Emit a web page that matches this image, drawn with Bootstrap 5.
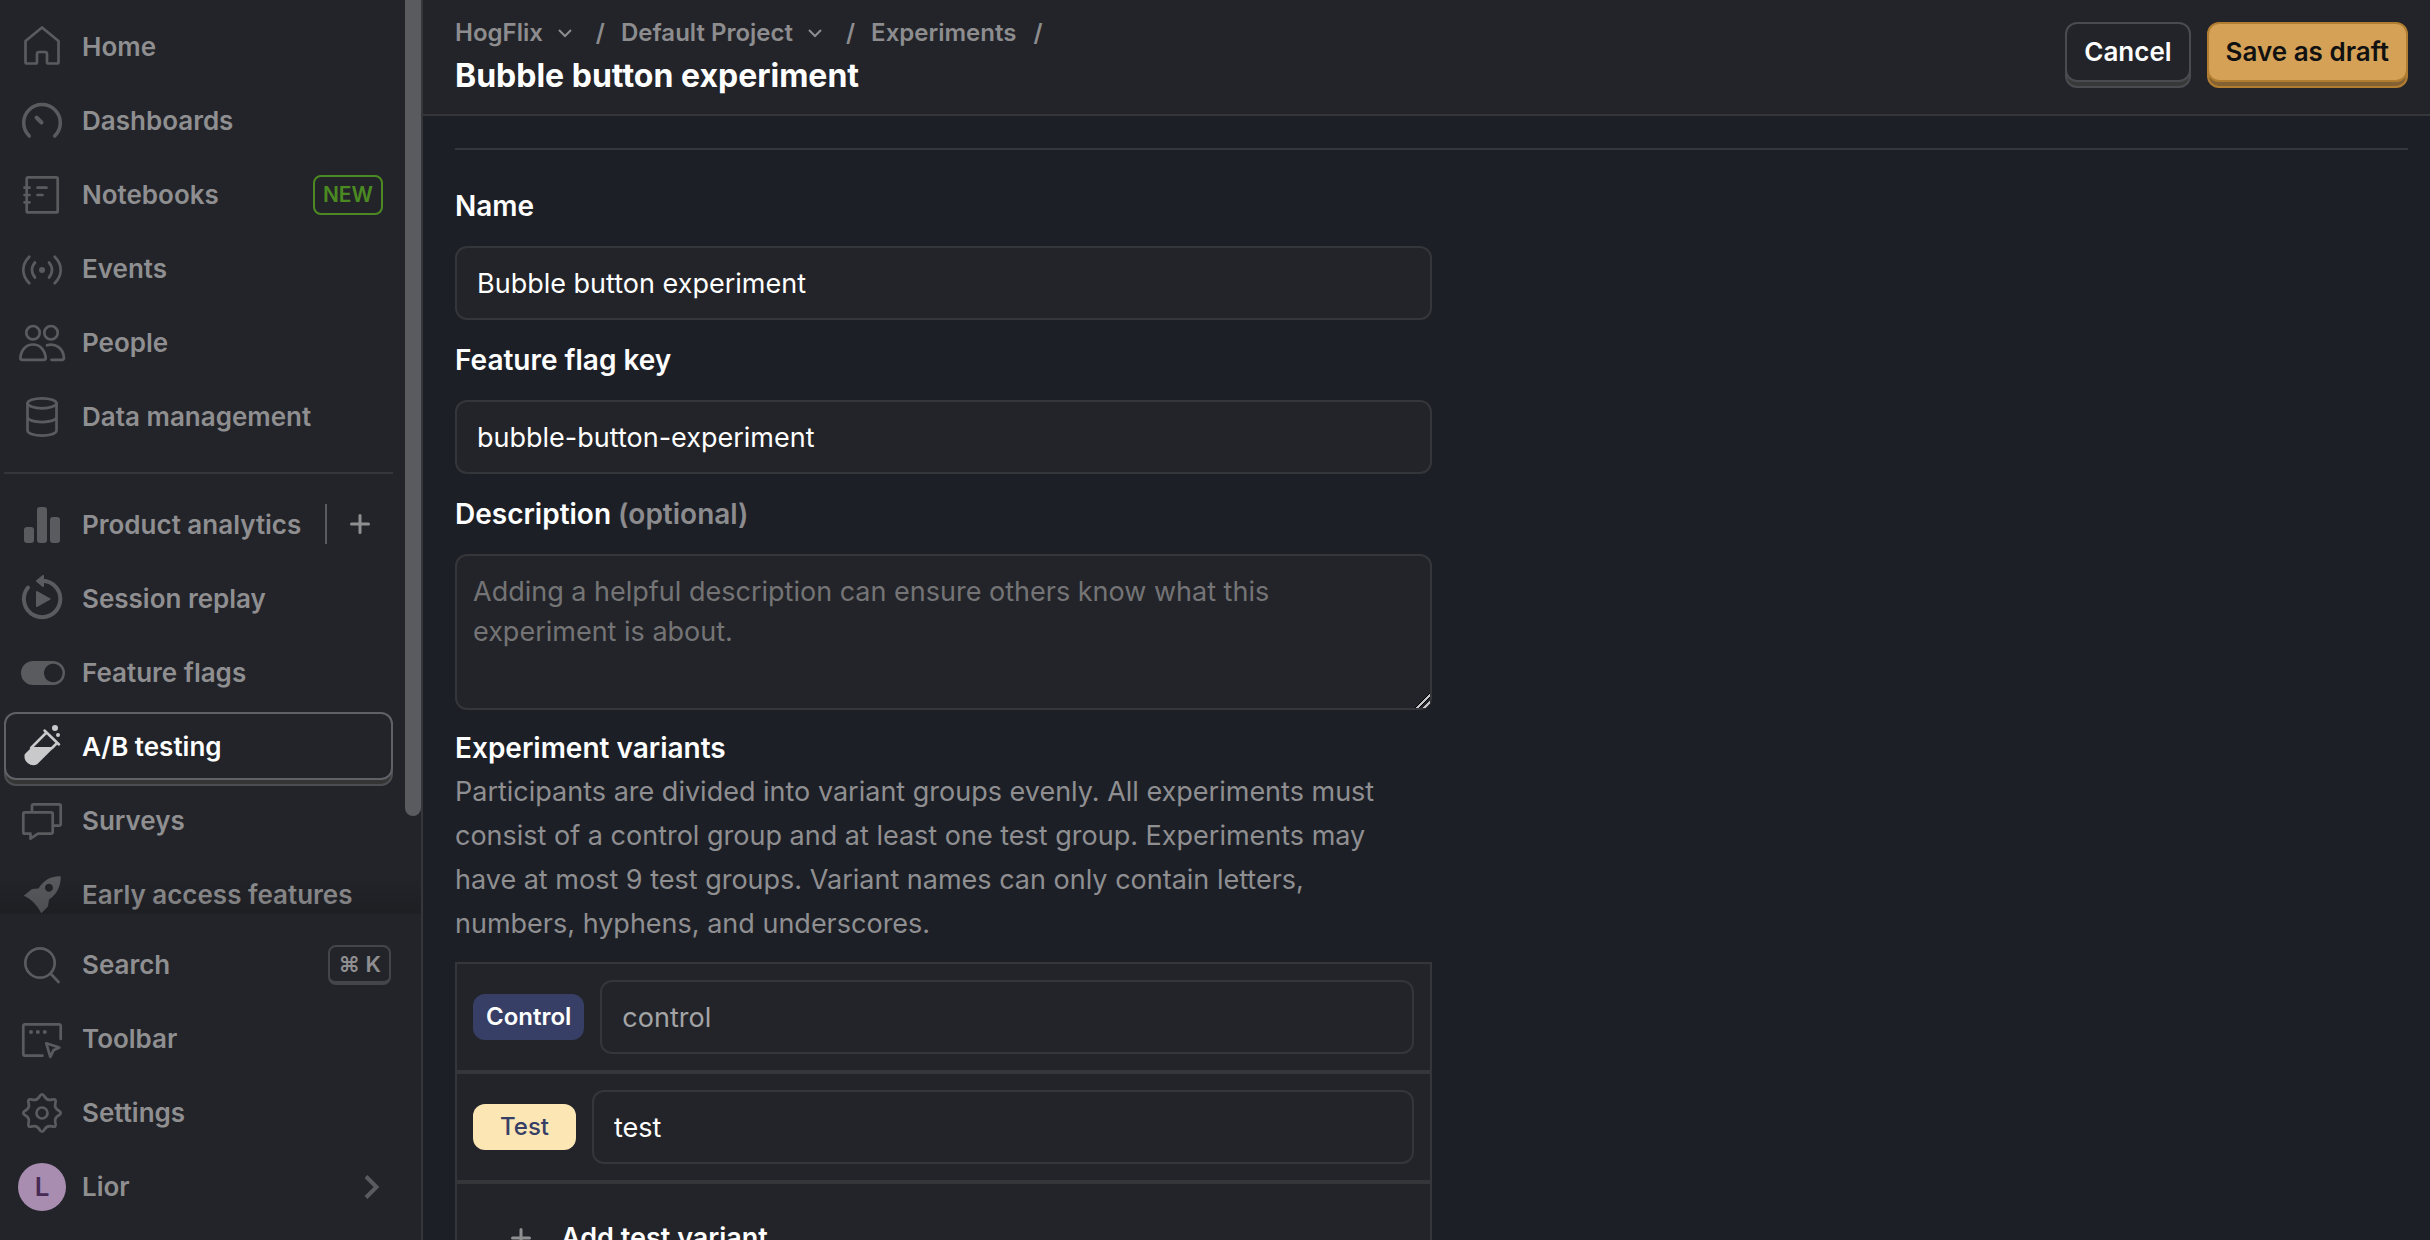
<!DOCTYPE html>
<html lang="en" data-bs-theme="dark">
<head>
<meta charset="utf-8">
<meta name="viewport" content="width=device-width, initial-scale=1">
<title>Bubble button experiment</title>
<link href="https://cdn.jsdelivr.net/npm/bootstrap@5.3.0/dist/css/bootstrap.min.css" rel="stylesheet">
<style>
:root{--page:#1d1f27;--panel:#232429;--line:#35363a;--muted:#8f8f91;--icon:#5a5b5f;}
body{background:var(--page);color:#fff;font-family:Inter,"Liberation Sans",sans-serif;font-size:27px;line-height:44px;overflow:hidden}
.sidebar{width:423px;background:var(--panel);border-right:2px solid var(--line)}
.side-scroll{min-height:0}
.side-fade{left:0;right:0;bottom:0;height:40px;background:linear-gradient(transparent,rgba(0,0,0,.15))}
.side-thumb{right:0;top:0;width:16px;height:816px;background:#5a5b5f;border-radius:0 0 8px 8px}
.side-list{padding:9px 28px 0 4px}
.side-list hr{margin:19px 0 13px;border-top:2px solid var(--line);opacity:1}
.side-foot{padding:13px 28px 17px 4px}
.side-item{height:74px;padding:3px 0}
.side-link{height:68px;padding:1px 0 0 12px;border:2px solid transparent;border-radius:12px;color:var(--muted);font-weight:600;font-size:26px;text-decoration:none;background:none;gap:16px}
.side-link svg{width:48px;height:48px;color:var(--icon);flex:none}
.side-link.active{color:#fff;background:var(--panel);border-color:#606166;box-shadow:0 6px 0 -2px #353535,0 6px 0 0 #4c4d50}
.side-link.active svg{color:#c9c9cb}
.ico{fill:none;stroke:currentColor;stroke-width:2.7;stroke-linecap:round;stroke-linejoin:round}
.new-tag{height:40px;margin-right:8px;padding:0 8px;border:2px solid #4b8a22;border-radius:8px;color:#4b8a22;font-size:21px;font-weight:600;line-height:36px}
.key-tag{height:40px;padding:0 8px;border:2px solid #44454a;border-bottom-width:4px;border-radius:8px;font-size:22px;font-weight:600;line-height:34px;font-family:Inter,"DejaVu Sans",sans-serif}
.side-sep{width:2px;height:40px;background:var(--icon)}
.side-add{width:66px;height:68px;border:0;background:none;color:var(--muted)}
.avatar-dot{width:48px;height:48px;border-radius:50%;background:#a88db1;color:#472b55;font-size:26px}
.topbar{height:116px;padding:22px 22px 0 32px;background:var(--panel);border-bottom:2px solid var(--line)}
.crumbs{font-size:24px;line-height:32px;font-weight:600;color:#8d8d8f;margin-top:-5px}
.crumbs span{padding-left:1px}
.crumbs a,.crumbs button{color:inherit;text-decoration:none;font:inherit;border:0;padding:0;background:none}
.page-title{font-size:32px;line-height:48px;font-weight:700;margin:3px 0 0}
.btn-raised{height:60px;padding:0 17px;border:2px solid #4a4b50;border-radius:12px;background:var(--panel);color:#fff;font-size:26px;font-weight:600;line-height:36px;box-shadow:0 6px 0 -2px #383838,0 6px 0 0 #4a4b50}
.btn-raised.gold{background:#d5a157;border-color:#b17d31;color:#111;box-shadow:0 6px 0 -2px #846132,0 6px 0 0 #b17d31}
.content{padding:32px 22px 0 32px}
.content>hr{margin:0;border-top:2px solid var(--line);opacity:1}
.form-stack{padding-top:34px}
.field-label{display:block;font-weight:600;font-size:28px;line-height:44px;margin:0}
.field-label span{color:#8c8c8f}
.field{margin-bottom:18px}
.field .form-control{margin-top:18px}
.field-area{margin-bottom:16px}
.form-control,.form-control:disabled{height:74px;padding:0 20px;border:2px solid var(--line);border-radius:12px;background:var(--panel);color:#fff;font-size:27px;line-height:40px}
.form-control:disabled{color:#a3a4a6}
textarea.form-control{height:156px;padding:16px}
textarea::-webkit-resizer{background:linear-gradient(135deg,transparent 48%,#000 48% 52%,#c4c4c6 52% 62%,#000 62% 66%,transparent 66% 74%,#c4c4c6 74% 84%,transparent 84%)}
.form-control::placeholder{color:#747476;opacity:1}
.helper{color:#8f8f91;margin:0 0 16px;padding-right:16px}
.variant-row{background:var(--panel);border:2px solid var(--line);padding:16px}
.variant-tag{height:46px;border-radius:12px;font-size:24px;font-weight:600;line-height:46px;background:#373f66;color:#fff;padding:0 13px;margin:0}
.variant-tag.sand{background:#fbe6b4;color:#373f66;font-weight:500;padding:0 27px}
.add-btn{height:76px;padding:0 30px;gap:22px;border:0;background:none;color:#fff;font-size:27px;font-weight:600}
</style>
</head>
<body>
<div class="d-flex vh-100">
  <nav class="sidebar d-flex flex-column flex-shrink-0" aria-label="Main">
    <div class="side-scroll flex-grow-1 position-relative overflow-hidden">
      <div class="side-list">
        <div class="side-item"><a href="#" class="side-link d-flex align-items-center"><svg viewBox="0 0 48 48" class="ico"><path d="M24 4.500 7.500 18V39a1.500 1.500 0 0 0 1.500 1.500h8.500a1.500 1.500 0 0 0 1.500-1.500v-8a2 2 0 0 1 2-2h6a2 2 0 0 1 2 2v8a1.500 1.500 0 0 0 1.500 1.500H39a1.500 1.500 0 0 0 1.500-1.500V18z"/></svg>Home</a></div>
        <div class="side-item"><a href="#" class="side-link d-flex align-items-center"><svg viewBox="0 0 48 48" class="ico"><path stroke-width="3.500" d="M11.300 39A18.300 18.300 0 1 1 36.700 39"/><path stroke-width="4" d="M18.500 20.500l5 5"/></svg>Dashboards</a></div>
        <div class="side-item"><a href="#" class="side-link d-flex align-items-center"><svg viewBox="0 0 48 48" class="ico"><rect x="8.700" y="6.400" width="31" height="35" rx="1.500"/><path d="M6.500 16.700h5M6.500 24h5M6.500 31.300h5M19.500 16.700h9M19.500 24h5"/></svg>Notebooks<span class="new-tag ms-auto">NEW</span></a></div>
        <div class="side-item"><a href="#" class="side-link d-flex align-items-center"><svg viewBox="0 0 48 48" class="ico"><circle cx="24" cy="25" r="3" fill="currentColor" stroke="none"/><path d="M17 17.500c-4 4.500-4 10.500 0 15M31 17.500c4 4.500 4 10.500 0 15M11.300 11.700c-8 8-8 18.600 0 26.600M36.700 11.700c8 8 8 18.600 0 26.600"/></svg>Events</a></div>
        <div class="side-item"><a href="#" class="side-link d-flex align-items-center"><svg viewBox="0 0 48 48" class="ico"><circle cx="15" cy="13.700" r="6.700"/><circle cx="33" cy="13.700" r="6.700"/><path d="M2.400 39C3 31 8 25.500 15 25.500S27 31 27.700 39q0 1.800-1.800 1.800H4.200q-1.800 0-1.800-1.800zM29 26.300C37 23.700 45.500 29 45.900 39q0 1.800-1.800 1.800H33.500"/></svg>People</a></div>
        <div class="side-item"><a href="#" class="side-link d-flex align-items-center"><svg viewBox="0 0 48 48" class="ico"><ellipse cx="24" cy="10.300" rx="14.500" ry="5"/><path d="M9.500 10.300v27c0 7 29 7 29 0v-27M9.500 24.300c2 6.300 27 6.300 29 0"/></svg>Data management</a></div>
        <hr>
        <div class="side-item d-flex align-items-center"><a href="#" class="side-link d-flex align-items-center flex-grow-1"><svg viewBox="0 0 48 48" fill="currentColor"><rect x="6" y="26" width="10" height="16" rx="3"/><rect x="19" y="6" width="10" height="36" rx="3"/><rect x="32" y="16" width="10" height="26" rx="3"/></svg>Product analytics</a><span class="side-sep"></span><button class="side-add p-0 d-flex align-items-center justify-content-center" aria-label="New insight"><svg width="24" height="24" viewBox="0 0 24 24" fill="none" stroke="currentColor" stroke-width="3" stroke-linecap="round"><path d="M12 3.500v17M3.500 12h17"/></svg></button></div>
        <div class="side-item"><a href="#" class="side-link d-flex align-items-center"><svg viewBox="0 0 48 48" class="ico"><path stroke-width="4" d="M24 5.800A18.200 18.200 0 1 1 10 12.500"/><path fill="currentColor" stroke-width="2" d="M19 6l6-5v10zM19 17l12.500 7L19 31z"/></svg>Session replay</a></div>
        <div class="side-item"><a href="#" class="side-link d-flex align-items-center"><svg viewBox="0 0 48 48" fill="currentColor"><path fill-rule="evenodd" d="M15 12h20a12 12 0 0 1 0 24H15a12 12 0 0 1 0-24zM35.200 14.700a9.300 9.300 0 1 0 .1 0z"/></svg>Feature flags</a></div>
        <div class="side-item"><a href="#" class="side-link active d-flex align-items-center" aria-current="page"><svg viewBox="0 0 48 48" class="ico"><circle cx="37" cy="5" r="3" fill="currentColor" stroke="none"/><circle cx="40" cy="12" r="2" fill="currentColor" stroke="none"/><path stroke-width="2.500" d="M26.500 7.500l14.500 14M28.500 9.500L13 25M38.500 20.500L34 25"/><path fill="currentColor" stroke="none" d="M14 24L6.700 31.300A8.900 8.900 0 0 0 19.200 41.200L36.500 24z"/></svg>A/B testing</a></div>
        <div class="side-item"><a href="#" class="side-link d-flex align-items-center"><svg viewBox="0 0 48 48" class="ico"><path d="M6.800 15.300h26.400a1.500 1.500 0 0 1 1.500 1.500v18.400a1.500 1.500 0 0 1-1.500 1.500H20l-7.500 5v-5H6.800a1.500 1.500 0 0 1-1.500-1.500V16.800a1.500 1.500 0 0 1 1.500-1.500zM14 15V8.800a1.500 1.500 0 0 1 1.500-1.500h25.700a1.500 1.500 0 0 1 1.500 1.500v18.400a1.500 1.500 0 0 1-1.500 1.500H35"/></svg>Surveys</a></div>
        <div class="side-item"><a href="#" class="side-link d-flex align-items-center"><svg viewBox="0 0 48 48" fill="currentColor"><path fill-rule="evenodd" d="M42.700 5.300C34 5 26 8.500 20.500 17.500L14 18 5.700 24.700C11 26.500 19 33 23.300 42.300L30 35.500 31 28.500C39 23.500 43 15 42.700 5.300zM31 12.700a4 4 0 1 1-.1 0z"/></svg>Early access features</a></div>
      </div>
      <div class="side-fade position-absolute"></div>
      <div class="side-thumb position-absolute"></div>
    </div>
    <div class="side-foot">
      <div class="side-item"><a href="#" class="side-link d-flex align-items-center"><svg viewBox="0 0 48 48" class="ico"><circle cx="22" cy="22" r="14.700"/><path d="M33 33l7.500 8"/></svg>Search<span class="key-tag ms-auto">⌘ K</span></a></div>
      <div class="side-item"><a href="#" class="side-link d-flex align-items-center"><svg viewBox="0 0 48 48" class="ico"><path d="M42.700 24V11a1.700 1.700 0 0 0-1.700-1.700H7A1.700 1.700 0 0 0 5.300 11v28A1.700 1.700 0 0 0 7 40.700h17.500M28.300 28.300l13 4.200-5.800 2.800-3.200 6.500z"/><g fill="currentColor" stroke="none"><circle cx="13" cy="17" r="2"/><circle cx="19.800" cy="17" r="2"/><circle cx="26.800" cy="17" r="2"/></g></svg>Toolbar</a></div>
      <div class="side-item"><a href="#" class="side-link d-flex align-items-center"><svg viewBox="0 0 48 48" class="ico"><circle cx="24" cy="24" r="5.500"/><path d="M40.500 21.500Q45 24 40.500 26.500Q36 29 37.400 33.900Q38.900 38.900 33.900 37.400Q29 36 26.500 40.500Q24 45 21.500 40.500Q19 36 14.100 37.400Q9.100 38.900 10.600 33.900Q12 29 7.500 26.500Q3 24 7.500 21.500Q12 19 10.600 14.100Q9.100 9.100 14.100 10.600Q19 12 21.500 7.500Q24 3 26.500 7.500Q29 12 33.900 10.600Q38.900 9.100 37.400 14.100Q36 19 40.500 21.500z"/></svg>Settings</a></div>
      <div class="side-item"><button class="side-link d-flex align-items-center w-100"><span class="avatar-dot d-flex align-items-center justify-content-center">L</span>Lior<svg viewBox="0 0 48 48" class="ico ms-auto"><path stroke-width="4" stroke-linecap="butt" stroke-linejoin="miter" d="M23 13.500L33.500 24 23 34.500"/></svg></button></div>
    </div>
  </nav>
  <div class="d-flex flex-column flex-grow-1 overflow-hidden">
    <header class="topbar d-flex justify-content-between align-items-start flex-shrink-0">
      <div>
        <nav class="crumbs d-flex align-items-center" aria-label="Breadcrumb">
          <button class="d-flex align-items-center gap-2">HogFlix<svg class="mx-1" width="20" height="20" viewBox="0 0 20 20" fill="none" stroke="currentColor" stroke-width="2"><path d="M4 7l6 6 6-6"/></svg></button><span class="mx-3">/</span>
          <button class="d-flex align-items-center gap-2">Default Project<svg class="mx-1" width="20" height="20" viewBox="0 0 20 20" fill="none" stroke="currentColor" stroke-width="2"><path d="M4 7l6 6 6-6"/></svg></button><span class="mx-3">/</span>
          <a href="#">Experiments</a><span class="ms-3">/</span>
        </nav>
        <h1 class="page-title">Bubble button experiment</h1>
      </div>
      <div class="d-flex gap-3">
        <button class="btn-raised">Cancel</button>
        <button class="btn-raised gold">Save as draft</button>
      </div>
    </header>
    <main class="content flex-grow-1 overflow-hidden">
      <hr>
      <form class="row gx-0">
        <div class="col-6 form-stack">
          <div class="field"><label class="field-label" for="exp-name">Name</label><input class="form-control" id="exp-name" value="Bubble button experiment"></div>
          <div class="field"><label class="field-label" for="flag-key">Feature flag key</label><input class="form-control" id="flag-key" value="bubble-button-experiment"></div>
          <div class="field field-area"><label class="field-label" for="exp-desc">Description <span>(optional)</span></label><textarea class="form-control" id="exp-desc" placeholder="Adding a helpful description can ensure others know what this experiment is about."></textarea></div>
          <h2 class="field-label">Experiment variants</h2>
          <p class="helper">Participants are divided into variant groups evenly. All experiments must consist of a control group and at least one test group. Experiments may have at most 9 test groups. Variant names can only contain letters, numbers, hyphens, and underscores.</p>
          <div class="variant-row d-flex align-items-center gap-3"><label class="variant-tag" for="v-control">Control</label><input class="form-control" id="v-control" value="control" disabled></div>
          <div class="variant-row d-flex align-items-center gap-3"><label class="variant-tag sand" for="v-test">Test</label><input class="form-control" id="v-test" value="test"></div>
          <div class="variant-row"><button type="button" class="add-btn d-flex align-items-center"><svg width="36" height="36" viewBox="0 0 36 36" fill="none" stroke="#8f8f91" stroke-width="3" stroke-linecap="round"><path d="M18 9.500v17M9.500 18h17"/></svg>Add test variant</button></div>
        </div>
      </form>
    </main>
  </div>
</div>
<script src="https://cdn.jsdelivr.net/npm/bootstrap@5.3.0/dist/js/bootstrap.bundle.min.js"></script>
</body>
</html>
